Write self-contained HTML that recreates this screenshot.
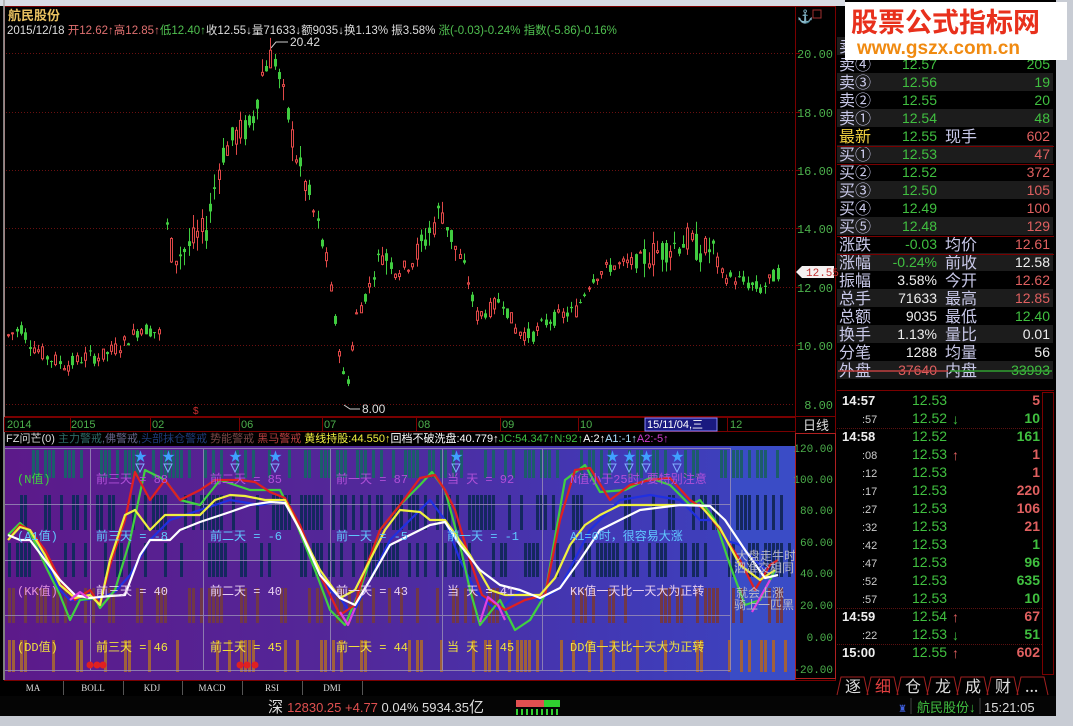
<!DOCTYPE html>
<html><head><meta charset="utf-8"><style>
body{margin:0;width:1073px;height:726px;overflow:hidden;background:#000;font-family:"Liberation Sans","Noto Sans CJK SC",sans-serif}
svg{display:block}
</style></head><body>
<svg id="s" width="1073" height="726" xmlns="http://www.w3.org/2000/svg" font-family="Liberation Sans, Noto Sans CJK SC, sans-serif">
<defs>
<linearGradient id="ig" x1="0" x2="1" y1="0" y2="0">
<stop offset="0" stop-color="#5c1a8a"/><stop offset="0.45" stop-color="#52289a"/><stop offset="0.75" stop-color="#4238b4"/><stop offset="1" stop-color="#3c44c0"/>
</linearGradient>
</defs>
<rect width="1073" height="726" fill="#000"/>
<rect x="0" y="0" width="845" height="6" fill="#d8dce4"/>
<rect x="4.5" y="6.5" width="831" height="410" fill="none" stroke="#7a0000"/>
<line x1="795.5" y1="6" x2="795.5" y2="680" stroke="#7a0000"/>
<line x1="835.5" y1="6" x2="835.5" y2="680" stroke="#7a0000"/>
<line x1="4" y1="0" x2="4" y2="680" stroke="#aaa" stroke-width="1.5"/>
<g stroke="#6a1010" stroke-dasharray="1,2">
<line x1="6" x2="795" y1="53.5" y2="53.5"/><line x1="6" x2="795" y1="112.5" y2="112.5"/><line x1="6" x2="795" y1="170.5" y2="170.5"/><line x1="6" x2="795" y1="228.5" y2="228.5"/><line x1="6" x2="795" y1="287.5" y2="287.5"/><line x1="6" x2="795" y1="345.5" y2="345.5"/><line x1="6" x2="795" y1="404.5" y2="404.5"/>
</g>
<g font-size="12" fill="#4cb04c" text-anchor="end" font-family="Liberation Mono, monospace">
<text x="833" y="58">20.00</text><text x="833" y="117">18.00</text><text x="833" y="175">16.00</text><text x="833" y="233">14.00</text><text x="833" y="292">12.00</text><text x="833" y="350">10.00</text><text x="833" y="409">8.00</text>
</g>
<g stroke="#7a0000"><line x1="795" x2="800" y1="53.5" y2="53.5"/><line x1="795" x2="800" y1="112.5" y2="112.5"/><line x1="795" x2="800" y1="170.5" y2="170.5"/><line x1="795" x2="800" y1="228.5" y2="228.5"/><line x1="795" x2="800" y1="287.5" y2="287.5"/><line x1="795" x2="800" y1="345.5" y2="345.5"/></g>
<polygon points="796,272 802,266 834,266 834,278 802,278" fill="#f4f0f0"/>
<text x="806" y="276" font-size="11" fill="#c03030" font-family="Liberation Mono, monospace">12.55</text>
<text x="797" y="21" font-size="13" fill="#ddd">⚓</text>
<rect x="813" y="10" width="8" height="8" fill="none" stroke="#a03030"/>
<text x="8" y="20" font-size="13" fill="#e8c060" font-weight="bold">航民股份</text>
<text x="7" y="34" font-size="11.5" fill="#ddd" xml:space="preserve">2015/12/18 <tspan fill="#e07070">开12.62↑高12.85↑</tspan><tspan fill="#50c050">低12.40↑</tspan><tspan fill="#ddd">收12.55↓量71633↓额9035↓换1.13% 振3.58% </tspan><tspan fill="#50c050">涨(-0.03)-0.24% 指数(-5.86)-0.16%</tspan></text>
<polyline points="271,48 276,42 288,42" fill="none" stroke="#ccc"/>
<text x="290" y="46" font-size="12" fill="#ddd">20.42</text>
<polyline points="344,405 350,409 360,409" fill="none" stroke="#ccc"/>
<text x="362" y="413" font-size="12" fill="#ddd">8.00</text>
<text x="193" y="414" font-size="10" fill="#d03030">$</text>
<g id="candles"></g>
<rect x="4.5" y="417.5" width="791" height="14" fill="#000" stroke="#7a0000"/>
<g font-size="11" fill="#4cb04c">
<text x="7" y="428">2014</text><text x="71" y="428">2015</text><text x="152" y="428">02</text><text x="241" y="428">06</text><text x="324" y="428">07</text><text x="418" y="428">08</text><text x="502" y="428">09</text><text x="580" y="428">10</text><text x="730" y="428">12</text>
</g>
<g stroke="#7a0000"><line x1="70.5" x2="70.5" y1="418" y2="431"/><line x1="150.5" x2="150.5" y1="418" y2="431"/><line x1="239.5" x2="239.5" y1="418" y2="431"/><line x1="322.5" x2="322.5" y1="418" y2="431"/><line x1="416.5" x2="416.5" y1="418" y2="431"/><line x1="500.5" x2="500.5" y1="418" y2="431"/><line x1="578.5" x2="578.5" y1="418" y2="431"/><line x1="727.5" x2="727.5" y1="418" y2="431"/></g>
<rect x="645" y="418" width="72" height="13" fill="#1a1a80" stroke="#8888ff"/>
<text x="647" y="428" font-size="11" fill="#fff">15/11/04,三</text>
<text x="803" y="430" font-size="13" fill="#ddd">日线</text>
<text x="6" y="442" font-size="11" fill="#ddd" xml:space="preserve">FZ问芒(0) <tspan fill="#2e6a66">主力警戒</tspan><tspan fill="#66668a">,佛警戒</tspan><tspan fill="#1e3c7a">,头部抹仓警戒</tspan> <tspan fill="#7a4848">势能警戒</tspan> <tspan fill="#b84040">黑马警戒</tspan> <tspan fill="#f0f040">黄线持股:44.550↑</tspan><tspan fill="#fff">回档不破洗盘:40.779↑</tspan><tspan fill="#40c040">JC:54.347↑N:92↑</tspan><tspan fill="#fff">A:2↑</tspan><tspan fill="#b0e0ff">A1:-1↑</tspan><tspan fill="#d040d0">A2:-5↑</tspan></text>
<rect x="5" y="446" width="790" height="234" fill="url(#ig)"/>
<rect x="730" y="446" width="65" height="234" fill="#3a4cc6"/>
<g id="bars"></g>
<g stroke="#9a90b8" stroke-width="1" opacity="0.8">
<line x1="5" x2="730" y1="448.5" y2="448.5"/><line x1="5" x2="730" y1="504.5" y2="504.5"/><line x1="5" x2="730" y1="560.5" y2="560.5"/><line x1="5" x2="730" y1="615.5" y2="615.5"/><line x1="5" x2="730" y1="670.5" y2="670.5"/>
<line x1="90.5" x2="90.5" y1="448" y2="670"/><line x1="203.5" x2="203.5" y1="448" y2="670"/><line x1="330.5" x2="330.5" y1="448" y2="670"/><line x1="442.5" x2="442.5" y1="448" y2="670"/><line x1="542.5" x2="542.5" y1="448" y2="670"/><line x1="730.5" x2="730.5" y1="448" y2="670"/>
</g>
<g font-size="12" fill="none" stroke-width="2.2" stroke-linejoin="round">
<polyline stroke="#2030e0" points="8,540 20,527 30,530 45,560 60,590 70,600 85,600 100,598 115,592 130,575 150,540 170,520 200,510 230,500 260,505 285,500 300,530 315,565 330,590 340,598 352,615 370,580 390,540 410,520 430,500 445,520 460,560 475,590 490,605 500,610 520,590 540,600 560,588 590,530 620,500 650,495 680,500 700,520 715,520 725,540 740,545 760,565 775,575"/>
<polyline stroke="#40d040" points="8,535 20,523 30,532 45,565 60,595 70,620 80,600 95,598 100,608 115,590 130,540 145,470 165,480 180,500 200,505 220,480 235,485 250,490 280,490 295,520 315,570 330,610 345,625 360,590 380,530 400,505 420,485 432,472 445,490 460,545 470,590 480,625 500,600 515,630 530,620 545,595 565,480 585,465 600,492 625,490 650,478 670,485 690,505 700,500 715,520 730,565 745,605 760,600 775,570"/>
<polyline stroke="#e02020" points="8,540 20,525 30,530 45,550 60,580 75,600 90,590 100,605 110,565 125,520 135,472 150,500 165,480 180,500 200,490 215,480 240,480 255,482 270,492 285,498 300,525 320,575 340,615 355,605 365,570 380,530 400,505 420,478 435,475 445,490 455,510 470,560 482,595 505,610 525,600 545,595 560,520 575,470 590,468 610,500 630,485 650,480 670,478 690,500 705,510 720,530 740,560 755,590 770,565 778,560"/>
<polyline stroke="#f0f040" points="8,540 20,527 30,530 45,555 60,585 75,598 90,595 100,605 110,560 125,515 135,510 150,530 165,515 180,515 200,515 215,500 230,495 245,496 265,500 285,500 300,530 320,570 340,598 355,590 370,560 385,530 400,510 420,512 430,520 445,520 470,555 490,590 505,595 520,595 540,595 555,578 570,545 585,525 600,515 620,505 650,505 680,505 700,505 720,528 740,565 760,580 775,570"/>
<polyline stroke="#fff" points="8,535 20,540 30,540 45,560 60,580 75,595 90,598 110,596 125,595 140,555 150,540 170,540 180,530 200,522 230,512 250,505 270,502 285,503 300,530 320,575 340,598 355,605 370,580 390,545 410,535 430,525 445,522 460,545 480,570 500,585 520,590 540,598 560,588 580,560 600,530 640,510 680,505 710,506 725,520 745,550 765,578 778,575"/>
<polyline stroke="#e040e0" points="70,600 80,592 88,598"/>
<polyline stroke="#e040e0" points="340,612 348,625 355,608"/>
<polyline stroke="#e040e0" points="480,622 488,597 498,605 505,620"/>
<polyline stroke="#e040e0" points="752,612 760,598 770,580"/>
</g>
<g id="stars"></g>
<g font-size="12" font-family="Liberation Mono, Noto Sans CJK SC, monospace">
<text x="17" y="483" fill="#40d040">(N值)</text>
<text x="96" y="483" fill="#b050d8">前三天 = 88</text><text x="210" y="483" fill="#b050d8">前二天 = 85</text><text x="336" y="483" fill="#b050d8">前一天 = 87</text><text x="447" y="483" fill="#b050d8">当  天 = 92</text><text x="570" y="483" fill="#b050d8">N值小于25时,要特别注意</text>
<text x="17" y="540" fill="#60c8ff">(A1值)</text>
<text x="96" y="540" fill="#60c8ff">前三天 = -8</text><text x="210" y="540" fill="#60c8ff">前二天 = -6</text><text x="336" y="540" fill="#60c8ff">前一天 = -5</text><text x="447" y="540" fill="#60c8ff">前一天 = -1</text><text x="570" y="540" fill="#60c8ff">A1=0时，很容易大涨</text>
<text x="17" y="595" fill="#e090e0">(KK值)</text>
<text x="96" y="595" fill="#e8d0f0">前三天 = 40</text><text x="210" y="595" fill="#e8d0f0">前二天 = 40</text><text x="336" y="595" fill="#e8d0f0">前一天 = 43</text><text x="447" y="595" fill="#e8d0f0">当  天 = 41</text><text x="570" y="595" fill="#e8d0f0">KK值一天比一天大为正转</text>
<text x="17" y="651" fill="#f0e040">(DD值)</text>
<text x="96" y="651" fill="#f0e040">前三天 = 46</text><text x="210" y="651" fill="#f0e040">前二天 = 45</text><text x="336" y="651" fill="#f0e040">前一天 = 44</text><text x="447" y="651" fill="#f0e040">当  天 = 45</text><text x="570" y="651" fill="#f0e040">DD值一天比一天大为正转</text>
</g>
<g font-size="12" fill="#b8b8c8"><text x="736" y="560">大盘走牛时</text><text x="734" y="572">泗准交相同</text><text x="736" y="597">就会上涨</text><text x="734" y="609">骑上一匹黑</text></g>
<g fill="#e02020"><circle cx="90" cy="665" r="3.5"/><circle cx="97" cy="665" r="3.5"/><circle cx="103" cy="665" r="3.5"/><circle cx="240" cy="665" r="3.5"/><circle cx="247" cy="665" r="3.5"/><circle cx="255" cy="665" r="3.5"/></g>
<g font-size="11" fill="#4cb04c" text-anchor="end" font-family="Liberation Mono, monospace">
<text x="833" y="452">120.00</text><text x="833" y="483">100.00</text><text x="833" y="514">80.00</text><text x="833" y="546">60.00</text><text x="833" y="577">40.00</text><text x="833" y="609">20.00</text><text x="833" y="641">0.00</text><text x="833" y="673">-20.00</text>
</g>
<rect x="795.5" y="433.5" width="40" height="245" fill="none" stroke="#b02020"/>
<rect x="0" y="680" width="836" height="15" fill="#000"/>
<line x1="4" x2="836" y1="680.5" y2="680.5" stroke="#7a0000"/>
<g font-size="9" fill="#ddd" text-anchor="middle" font-family="Liberation Serif, serif">
<text x="33" y="691">MA</text><text x="93" y="691">BOLL</text><text x="152" y="691">KDJ</text><text x="212" y="691">MACD</text><text x="272" y="691">RSI</text><text x="332" y="691">DMI</text>
</g>
<g stroke="#555"><line x1="63.5" x2="63.5" y1="681" y2="695"/><line x1="123.5" x2="123.5" y1="681" y2="695"/><line x1="182.5" x2="182.5" y1="681" y2="695"/><line x1="242.5" x2="242.5" y1="681" y2="695"/><line x1="302.5" x2="302.5" y1="681" y2="695"/><line x1="362.5" x2="362.5" y1="681" y2="695"/></g>
<rect x="0" y="696" width="1073" height="20" fill="#050505"/>
<text x="268" y="712" font-size="15" fill="#ddd">深 <tspan fill="#e05050" font-size="13">12830.25 +4.77</tspan><tspan fill="#ddd" font-size="13"> 0.04% 5934.35</tspan>亿</text>
<rect x="516" y="700" width="28" height="7" fill="#e05050"/><rect x="544" y="700" width="16" height="7" fill="#30d030"/>
<g fill="#30d030"><rect x="516" y="709" width="2" height="6"/><rect x="521" y="709" width="2" height="6"/><rect x="526" y="709" width="2" height="6"/><rect x="531" y="709" width="2" height="6"/><rect x="536" y="709" width="2" height="6"/><rect x="541" y="709" width="2" height="6"/><rect x="546" y="709" width="2" height="6"/><rect x="551" y="709" width="2" height="6"/><rect x="556" y="709" width="2" height="6"/></g>
<line x1="911" x2="911" y1="698" y2="714" stroke="#444"/>
<text x="898" y="712" font-size="10" fill="#4060e0">♜</text>
<text x="917" y="712" font-size="13" fill="#40c040">航民股份↓</text>
<line x1="980" x2="980" y1="698" y2="714" stroke="#444"/>
<text x="984" y="712" font-size="13" fill="#ddd">15:21:05</text>
<rect x="0" y="716" width="1073" height="10" fill="#c8ccd4"/>
<rect x="1056" y="0" width="17" height="716" fill="#c8ccd4"/>
<g id="rp" font-size="13"></g>
<rect x="845" y="2" width="222" height="58" fill="#fff"/>
<text x="851" y="32" font-size="27" font-weight="bold" fill="#e8301c" font-family="Noto Sans CJK SC, sans-serif">股票公式指标网</text>
<text x="857" y="54" font-size="19" font-weight="bold" fill="#f08a10">www.gszx.com.cn</text>
</svg>
<script>
var NS="http://www.w3.org/2000/svg";
function el(p,t,a,txt){var e=document.createElementNS(NS,t);for(var k in a)e.setAttribute(k,a[k]);if(txt!==undefined)e.textContent=txt;p.appendChild(e);return e;}
var s=7;function r(){s=(s*9301+49297)%233280;return s/233280;}
var A=[[6,10.3],[20,10.6],[30,10],[45,9.6],[65,9.3],[85,9.6],[100,9.6],[120,10],[140,10.6],[158,10.4],[163,14.5],[172,13],[185,13.3],[205,14],[220,16.5],[235,17.2],[250,17.5],[262,19.5],[272,20],[282,18.5],[295,16.5],[310,14.8],[325,13],[335,10.5],[345,8.4],[355,11],[368,12],[380,13.3],[395,12.5],[410,12.8],[430,14],[440,14.7],[452,13.5],[465,12.5],[475,11],[488,11.2],[500,11.6],[515,10.5],[530,10.3],[545,10.8],[560,11],[575,11.2],[590,12.3],[610,12.7],[630,12.8],[650,13.1],[670,13.4],[685,13.6],[700,13.2],[712,13.3],[720,12.4],[740,12.2],[760,11.9],[777,12.5]];
function P(x){for(var i=1;i<A.length;i++){if(x<=A[i][0]){var a=A[i-1],b=A[i];return a[1]+(b[1]-a[1])*(x-a[0])/(b[0]-a[0]);}}return A[A.length-1][1];}
function Y(p){return 53+(20-p)*29.2;}
var g=document.getElementById('candles');
for(var x=7;x<=777;x+=4.3){
 if(x>158&&x<163)continue;
 var p=P(x),amp=p>13?1.0:0.5;
 var o=p+(r()-0.5)*amp,c=p+(r()-0.5)*amp;
 var h=Math.max(o,c)+r()*amp*0.5,l=Math.min(o,c)-r()*amp*0.5;
 var up=c>=o,col=up?'#e04848':'#40cc40';
 var xx=Math.round(x);
 el(g,'line',{x1:xx+1.5,x2:xx+1.5,y1:Y(h),y2:Y(l),stroke:col});
 var y1=Y(Math.max(o,c)),hh=Math.max(1,Y(Math.min(o,c))-y1);
 if(up)el(g,'rect',{x:xx+0.5,y:y1,width:2,height:hh,fill:'#000',stroke:col});
 else el(g,'rect',{x:xx,y:y1,width:3,height:hh,fill:col});
}
var b=document.getElementById('bars');
var bands=[[450,478,'#1c5c6c',0.45],[495,530,'#14285e',0.4],[543,577,'#14285e',0.45],[588,623,'#703848',0.35],[640,672,'#a0603c',0.3]];
for(var x=8;x<790;x+=4){bands.forEach(function(d){if(r()<d[3])el(b,'rect',{x:x,y:d[0],width:3,height:d[1]-d[0],fill:d[2]});});}
var st=document.getElementById('stars');
[140,168,235,275,456,612,629,646,677].forEach(function(x){el(st,'text',{x:x-6,y:461,'font-size':13,fill:'#40a0ff'},'★');el(st,'polygon',{points:(x-4)+',464 '+(x+4)+',464 '+x+',472',fill:'none',stroke:'#80b0ff'});});
var rp=document.getElementById('rp');
var rows=[['卖⑤','12.58','','','',''],['卖④','12.57','','205','g'],['卖③','12.56','','19','g'],['卖②','12.55','','20','g'],['卖①','12.54','','48','g'],['最新','12.55','现手','602','r'],['买①','12.53','','47','r'],['买②','12.52','','372','r'],['买③','12.50','','105','r'],['买④','12.49','','100','r'],['买⑤','12.48','','129','r'],['涨跌','-0.03','均价','12.61','r'],['涨幅','-0.24%','前收','12.58','w'],['振幅','3.58%','今开','12.62','r'],['总手','71633','最高','12.85','r'],['总额','9035','最低','12.40','g'],['换手','1.13%','量比','0.01','w'],['分笔','1288','均量','56','w'],['外盘','37640','内盘','33993','g']];
var C={g:'#40c040',r:'#e06060',w:'#eee'};
rows.forEach(function(R,i){var y=38+i*18;
 if(i%2==0)el(rp,'rect',{x:837,y:y-1,width:216,height:18,fill:'#1c1c1c'});
 var lc=i==5?'#f0d040':'#c8c8e8';
 el(rp,'text',{x:839,y:y+14,'font-size':16,fill:lc,'font-family':'Noto Sans CJK SC, sans-serif'},R[0]);
 var pc=i<13?'#40c040':'#eee';if(i==18)pc='#e06060';
 el(rp,'text',{x:937,y:y+13,'text-anchor':'end','font-size':14,fill:pc},R[1]);
 if(R[2])el(rp,'text',{x:945,y:y+14,'font-size':16,fill:'#c8c8e8','font-family':'Noto Sans CJK SC, sans-serif'},R[2]);
 el(rp,'text',{x:1050,y:y+13,'text-anchor':'end','font-size':14,fill:C[R[4]]||'#eee'},R[3]);
});
[146,164,236,254].forEach(function(q){el(rp,'line',{x1:837,x2:1054,y1:q+.5,y2:q+.5,stroke:'#7a0000'});});
el(rp,'line',{x1:838,x2:948,y1:371,y2:371,stroke:'#c04040','stroke-width':1.5});
el(rp,'line',{x1:950,x2:1052,y1:371,y2:371,stroke:'#30a030','stroke-width':1.5});
el(rp,'line',{x1:837,x2:1054,y1:390.5,y2:390.5,stroke:'#7a0000'});
var T=[['14:57','12.53','','5','r',1],[':57','12.52','d','10','g',0],['14:58','12.52','','161','g',1],[':08','12.53','u','1','r',0],[':12','12.53','','1','r',0],[':17','12.53','','220','r',0],[':27','12.53','','106','r',0],[':32','12.53','','21','r',0],[':42','12.53','','1','g',0],[':47','12.53','','96','g',0],[':52','12.53','','635','g',0],[':57','12.53','','10','g',0],['14:59','12.54','u','67','r',1],[':22','12.53','d','51','g',0],['15:00','12.55','u','602','r',1]];
T.forEach(function(R,i){var y=392+i*18;
 el(rp,'text',{x:R[5]?842:862,y:y+13,'font-size':R[5]?13:11,'font-weight':R[5]?'bold':'normal',fill:R[5]?'#eee':'#ccc'},R[0]);
 el(rp,'text',{x:912,y:y+13,'font-size':14,fill:'#40c040'},R[1]);
 if(R[2]=='u')el(rp,'text',{x:952,y:y+14,'font-size':14,fill:'#e06060','font-weight':'bold'},'↑');
 if(R[2]=='d')el(rp,'text',{x:952,y:y+14,'font-size':14,fill:'#40c040','font-weight':'bold'},'↓');
 el(rp,'text',{x:1040,y:y+13,'text-anchor':'end','font-size':14,'font-weight':'bold',fill:C[R[4]]},R[3]);
 if(R[5]&&i>0)el(rp,'line',{x1:837,x2:1042,y1:y+.5,y2:y+.5,stroke:'#5a1010','stroke-dasharray':'1,1'});
});
el(rp,'rect',{x:1042.5,y:392.5,width:11,height:282,fill:'#000',stroke:'#7a0000'});
el(rp,'rect',{x:836,y:675,width:220,height:21,fill:'#000'});
var tb=['逐','细','仓','龙','成','财','...'];
tb.forEach(function(t,i){el(rp,'text',{x:845+i*30,y:692,'font-size':16,fill:i==1?'#e04040':'#ddd','font-family':'Noto Sans CJK SC, sans-serif'},t);el(rp,'polyline',{points:(837+i*30)+',695 '+(841+i*30)+',677 '+(864+i*30)+',677 '+(868+i*30)+',695',fill:'none',stroke:'#a02020'});});
</script>
</body></html>
